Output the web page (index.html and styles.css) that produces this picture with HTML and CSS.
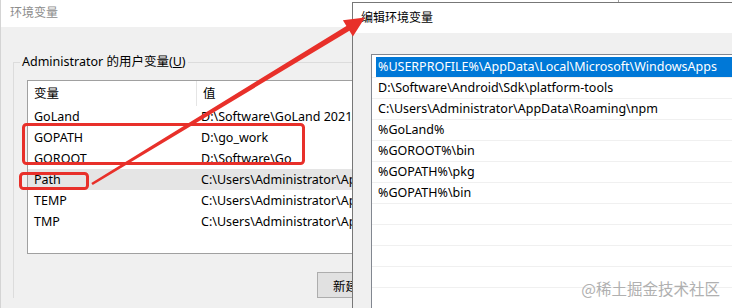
FILE: index.html
```html
<!DOCTYPE html>
<html>
<head>
  <title>编辑环境变量</title>
  <meta name="viewport" content="width=device-width, initial-scale=1.0">
  <link rel="stylesheet" href="styles.css">
</head>
<body>
  <div class="desktop">
    <div class="win env-win">
      <div class="titlebar">环境变量</div>
      <div class="win-body">
        <fieldset class="group">
          <legend>Administrator 的用户变量(<u>U</u>)</legend>
          <div class="var-list">
            <div class="var-row head"><span class="name">变量</span><span class="value">值</span></div>
            <div class="var-row"><span class="name">GoLand</span><span class="value">D:\Software\GoLand 2021</span></div>
            <div class="var-row"><span class="name">GOPATH</span><span class="value">D:\go_work</span></div>
            <div class="var-row"><span class="name">GOROOT</span><span class="value">D:\Software\Go</span></div>
            <div class="var-row selected"><span class="name">Path</span><span class="value">C:\Users\Administrator\Ap</span></div>
            <div class="var-row"><span class="name">TEMP</span><span class="value">C:\Users\Administrator\Ap</span></div>
            <div class="var-row"><span class="name">TMP</span><span class="value">C:\Users\Administrator\Ap</span></div>
          </div>
          <div class="actions">
            <button>新建</button>
          </div>
        </fieldset>
      </div>
    </div>

    <div class="win edit-win">
      <div class="titlebar">编辑环境变量</div>
      <div class="win-body">
        <ul class="path-list">
          <li class="selected"><span>%USERPROFILE%\AppData\Local\Microsoft\WindowsApps</span></li>
          <li><span>D:\Software\Android\Sdk\platform-tools</span></li>
          <li><span>C:\Users\Administrator\AppData\Roaming\npm</span></li>
          <li><span>%GoLand%</span></li>
          <li><span>%GOROOT%\bin</span></li>
          <li><span>%GOPATH%\pkg</span></li>
          <li><span>%GOPATH%\bin</span></li>
          <li><span></span></li>
          <li><span></span></li>
          <li><span></span></li>
          <li><span></span></li>
          <li><span></span></li>
        </ul>
      </div>
    </div>

    <svg class="marks" width="732" height="308" viewBox="0 0 732 308">
      <rect x="23.5" y="124.5" width="280" height="39" rx="3" />
      <rect x="20.5" y="173.5" width="67" height="15" rx="3" />
      <polygon class="arrow" points="91.3,182.9 346.4,25.9 342.9,20.2 365,17.5 352.9,36.4 349.4,30.7 92.7,185.1" />
    </svg>

    <div class="watermark">@稀土掘金技术社区</div>
  </div>
</body>
</html>
```

FILE: styles.css
```css
body {
  margin: 0;
  background: #fff;
  font-family: "Noto Sans", "Noto Sans CJK SC", sans-serif;
  font-size: 12.5px;
  color: #000;
}
.desktop {
  position: relative;
  width: 732px;
  height: 308px;
  overflow: hidden;
}
.win {
  background: #f0f0f0;
  box-sizing: border-box;
}
.titlebar {
  background: #fff;
  white-space: nowrap;
  font-size: 12px;
}

/* back window */
.env-win {
  width: 619px;
  height: 308px;
  border-left: 1px solid #d4d4d4;
  border-right: 1px solid #a0a0a0;
}
.env-win .titlebar {
  height: 27px;
  line-height: 25px;
  padding-left: 9px;
  color: #8c8c8c;
}
.env-win .win-body {
  padding: 27px 0 0 12px;
}
.group {
  margin: 0;
  padding: 10px 0 0 13px;
  border: 1px solid #dcdcdc;
  border-right: none;
  border-bottom: none;
  min-width: 0;
}
.group legend {
  padding: 0 2px;
  margin-left: -7px;
  line-height: 16px;
}
.var-list {
  width: 325px;
  height: 174px;
  box-sizing: border-box;
  background: #fff;
  border: 1px solid #a0a0a0;
  border-right: none;
  overflow: hidden;
}
.var-row {
  display: flex;
  height: 21px;
  line-height: 21px;
  white-space: nowrap;
}
.var-row.head {
  height: 25px;
  line-height: 25px;
}
.var-row .name {
  width: 168px;
  padding-left: 6px;
  box-sizing: border-box;
  flex: none;
}
.var-row.head .name {
  border-right: 1px solid #e5e5e5;
  width: 169px;
}
.var-row .value {
  flex: 1;
  min-width: 0;
  overflow: hidden;
  padding-left: 5px;
}
.var-row.head .value {
  padding-left: 6px;
}
.var-row.selected {
  background: #e5e5e5;
}
.actions {
  width: 35px;
  margin: 18px 0 0 290px;
  overflow: hidden;
}
.actions button {
  width: 80px;
  height: 26px;
  padding: 0 0 0 15px;
  text-align: left;
  white-space: nowrap;
  font: inherit;
  background: #e1e1e1;
  border: 1px solid #adadad;
  border-radius: 0;
}

/* front window */
.edit-win {
  position: absolute;
  left: 352px;
  top: 2px;
  width: 420px;
  height: 330px;
  border: 1px solid #777;
}
.edit-win .titlebar {
  height: 30px;
  line-height: 29px;
  padding-left: 8px;
}
.edit-win .win-body {
  padding: 21px 0 0 18px;
}
.path-list {
  list-style-type: none;
  margin: 0;
  padding: 2px 0 0;
  background: #fff;
  border: 1px solid #828790;
  height: 300px;
}
.path-list li {
  height: 20px;
  border-bottom: 1px solid #f0f0f0;
  white-space: nowrap;
}
.path-list li span {
  display: block;
  height: 20px;
  line-height: 20px;
  margin-left: 4px;
  padding-left: 2px;
}
.path-list li.selected span {
  background: #0078d7;
  color: #fff;
}

/* annotations */
.marks {
  position: absolute;
  left: 0;
  top: 0;
  pointer-events: none;
}
.marks rect {
  fill: none;
  stroke: #e8302a;
  stroke-width: 3;
}
.marks .arrow {
  fill: #e8302a;
}
.watermark {
  position: absolute;
  right: 12px;
  bottom: 9px;
  font-family: "Noto Sans CJK SC", sans-serif;
  font-size: 15.5px;
  color: #b0b0b0;
}
```
